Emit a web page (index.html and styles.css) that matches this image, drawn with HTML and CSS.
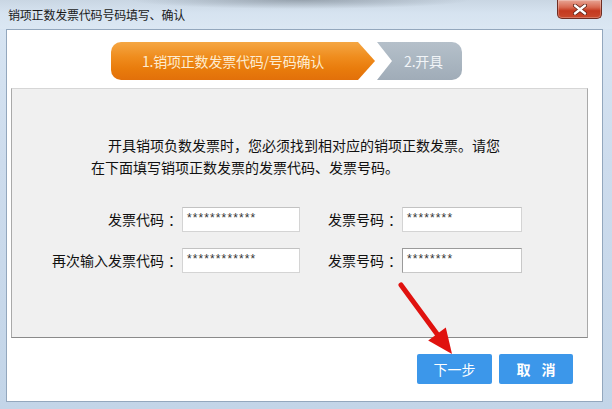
FILE: index.html
```html
<!DOCTYPE html>
<html lang="zh-CN">
<head>
<meta charset="utf-8">
<title>销项正数发票代码号码填写、确认</title>
<link rel="stylesheet" href="styles.css">
</head>
<body>
<div class="window">
  <div class="titlebar">
    <span class="title">销项正数发票代码号码填写、确认</span>
    <button class="close" aria-label="关闭">
      <svg width="14" height="11" viewBox="0 0 14 11">
        <path d="M2 1.5 L12 9.5 M12 1.5 L2 9.5" stroke="#5a2015" stroke-width="4" stroke-linecap="round"/>
        <path d="M2 1.5 L12 9.5 M12 1.5 L2 9.5" stroke="#ffffff" stroke-width="2.4" stroke-linecap="round"/>
      </svg>
    </button>
  </div>
  <div class="client">
    <div class="steps">
      <div class="step step-active">1.销项正数发票代码/号码确认</div>
      <div class="step step-next">2.开具</div>
    </div>
    <div class="panel">
      <p class="intro">开具销项负数发票时，您必须找到相对应的销项正数发票。请您<br>在下面填写销项正数发票的发票代码、发票号码。</p>
      <div class="form">
        <label class="label">发票代码<span class="colon">：</span></label>
        <div class="field">************</div>
        <label class="label">发票号码<span class="colon">：</span></label>
        <div class="field">********</div>
        <label class="label">再次输入发票代码<span class="colon">：</span></label>
        <div class="field">************</div>
        <label class="label">发票号码<span class="colon">：</span></label>
        <div class="field field-focus">********</div>
      </div>
    </div>
    <div class="actions">
      <button class="btn btn-next">下一步</button>
      <button class="btn btn-cancel">取 消</button>
    </div>
    <svg class="arrow" width="70" height="80" viewBox="0 0 70 80">
      <path d="M6 5 L45 58" stroke="#e0120f" stroke-width="5" stroke-linecap="round"/>
      <path d="M57 74 L50.8 47.5 L33.2 60.5 Z" fill="#e0120f"/>
    </svg>
  </div>
</div>
</body>
</html>
```
FILE: styles.css
```css
* { box-sizing: border-box; }
html, body { margin: 0; padding: 0; }
body {
  width: 612px;
  height: 409px;
  overflow: hidden;
  font-family: "Noto Sans CJK SC", "Noto Sans", sans-serif;
}
.window {
  width: 612px;
  height: 409px;
  display: flex;
  flex-direction: column;
  background: linear-gradient(180deg, #d9e6f3 0%, #cddced 40%, #c3d5e8 100%);
}
.titlebar {
  height: 29px;
  flex: none;
  display: flex;
  align-items: flex-start;
  justify-content: space-between;
  padding-left: 8px;
  padding-right: 10px;
  background:
    radial-gradient(ellipse 170px 9px at 300px 0, rgba(90,100,110,0.45), rgba(90,100,110,0) 100%),
    linear-gradient(180deg, #c9d6e3 0%, #d6e3f0 45%, #dbe7f3 100%);
}
.title {
  font-size: 12px;
  line-height: 29px;
  color: #1a1a1a;
  letter-spacing: -0.2px;
}
.close {
  width: 45px;
  height: 19px;
  margin: 0;
  padding: 0;
  border: 1px solid #6e2d22;
  border-top: none;
  border-radius: 0 0 5px 5px;
  background: linear-gradient(180deg, #e8a595 0%, #d86a52 40%, #c4391f 60%, #c94a2c 100%);
  display: flex;
  align-items: center;
  justify-content: center;
  box-shadow: inset 0 0 0 1px rgba(255,255,255,0.25);
}
.client {
  flex: 1;
  position: relative;
  margin: 0 9px 7px 6px;
  background: #ffffff;
  border: 1px solid #93a7bd;
  display: flex;
  flex-direction: column;
}
.steps {
  display: flex;
  height: 38px;
  margin-top: 12px;
  padding-left: 104px;
}
.step {
  height: 38px;
  display: flex;
  align-items: center;
  justify-content: center;
  font-size: 14px;
  letter-spacing: -0.2px;
}
.step-active {
  width: 264px;
  padding-right: 20px;
  color: #fdecd0;
  border-radius: 10px 0 0 10px;
  background: linear-gradient(180deg, #f5a744 0%, #ef8c1d 40%, #e97c0c 70%, #e2700a 100%);
  clip-path: polygon(0 0, calc(100% - 17px) 0, 100% 50%, calc(100% - 17px) 100%, 0 100%);
}
.step-next {
  width: 85px;
  margin-left: 2px;
  padding-left: 8px;
  color: #f1f4f7;
  border-radius: 0 10px 10px 0;
  background: linear-gradient(180deg, #b5c0ca 0%, #a8b4bf 60%, #a0acb8 100%);
  clip-path: polygon(0 0, 100% 0, 100% 100%, 0 100%, 15px 50%);
}
.panel {
  height: 250px;
  margin: 8px 14px 0 4px;
  background: #f0f0f0;
  border: 1px solid #a9a9a9;
  border-top-color: #d6d6d6;
  border-bottom-color: #8a8a8a;
  padding: 45px 0 0 28px;
}
.intro {
  margin: 0 0 29px 51px;
  font-size: 14px;
  line-height: 22px;
  color: #111111;
  text-indent: 17px;
  white-space: nowrap;
}
.form {
  display: grid;
  grid-template-columns: 142px 118px 102px 120px;
  grid-auto-rows: 25px;
  row-gap: 16px;
}
.label {
  font-size: 14px;
  line-height: 25px;
  color: #111111;
  text-align: right;
  padding-right: 4px;
  white-space: nowrap;
}
.colon {
  font-family: "Noto Sans CJK TC", "Noto Sans CJK SC", sans-serif;
  margin-left: 4px;
  margin-right: -4px;
}
.field {
  background: #ffffff;
  border: 1px solid #d4d4d4;
  border-top-color: #c2c2c2;
  padding-left: 4px;
  font-family: "Liberation Sans", Arial, sans-serif;
  font-size: 12px;
  letter-spacing: 1.1px;
  line-height: 21px;
  color: #333333;
}
.field-focus {
  border-color: #9a9a9a;
  border-bottom-color: #c8c8c8;
  border-right-color: #c8c8c8;
}
.actions {
  display: flex;
  justify-content: flex-end;
  gap: 7px;
  margin-top: 16px;
  padding-right: 29px;
}
.btn {
  height: 30px;
  margin: 0;
  padding: 0;
  border: none;
  border-radius: 2px;
  background: #3c97ea;
  color: #ffffff;
  font-family: "Noto Sans CJK SC", "Noto Sans", sans-serif;
  font-size: 14px;
}
.btn-next { width: 75px; }
.btn-cancel { width: 74px; font-weight: bold; word-spacing: 8px; }
.arrow {
  position: absolute;
  left: 388px;
  top: 250px;
  overflow: visible;
  pointer-events: none;
}
```
